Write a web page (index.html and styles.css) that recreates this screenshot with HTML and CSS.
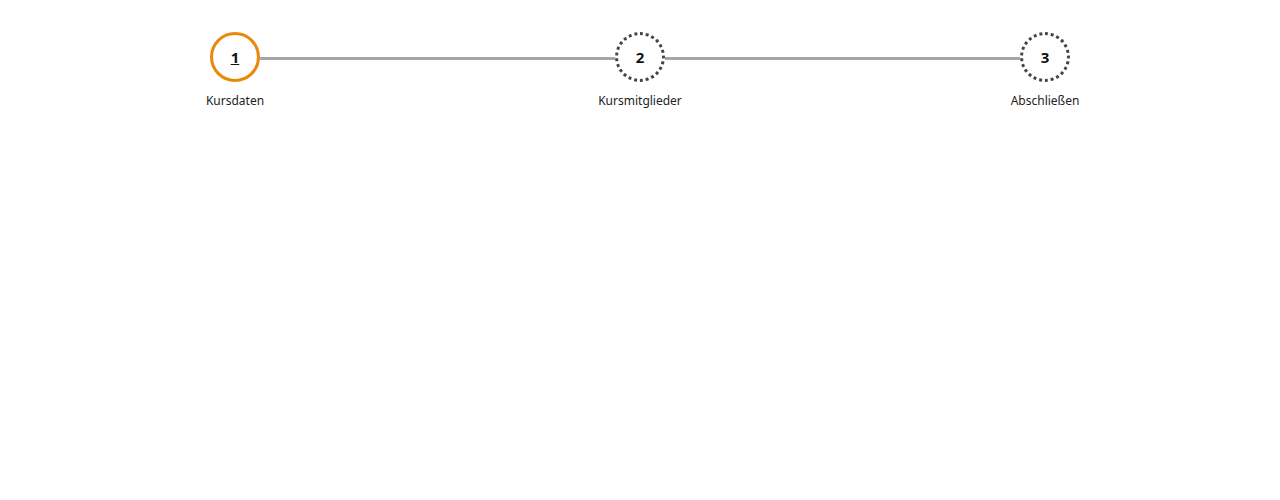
FILE: index.html
```html
<!DOCTYPE html>
<html lang="de">
<head>
<meta charset="utf-8">
<link rel="stylesheet" href="styles.css">
</head>
<body>
<div class="stepper">
  <div class="step active">
    <div class="circle"><span class="num">1</span></div>
    <div class="label">Kursdaten</div>
  </div>
  <div class="line"></div>
  <div class="step">
    <div class="circle"><span class="num">2</span></div>
    <div class="label">Kursmitglieder</div>
  </div>
  <div class="line"></div>
  <div class="step">
    <div class="circle"><span class="num">3</span></div>
    <div class="label">Abschließen</div>
  </div>
</div>
</body>
</html>
```
FILE: styles.css
```css
html, body {
  margin: 0;
  padding: 0;
  background: #fff;
}
body {
  font-family: "Noto Sans", "Open Sans", sans-serif;
  color: #222;
}
.stepper {
  width: 860px;
  margin: 0 auto;
  padding-top: 32px;
  display: flex;
  align-items: flex-start;
}
.step {
  width: 50px;
  display: flex;
  flex-direction: column;
  align-items: center;
}
.circle {
  box-sizing: border-box;
  width: 50px;
  height: 50px;
  border-radius: 50%;
  border: 3px dotted #444;
  display: flex;
  align-items: center;
  justify-content: center;
}
.step.active .circle {
  border: 3px solid #e8890c;
}
.num {
  font-size: 15px;
  font-weight: 700;
  color: #111;
  line-height: 1;
}
.step.active .num {
  text-decoration: underline;
}
.label {
  margin-top: 12px;
  font-size: 12px;
  line-height: 14px;
  white-space: nowrap;
  color: #222;
}
.line {
  flex: 1;
  height: 3px;
  margin-top: 25px;
  background: #a6a6a6;
}
```
